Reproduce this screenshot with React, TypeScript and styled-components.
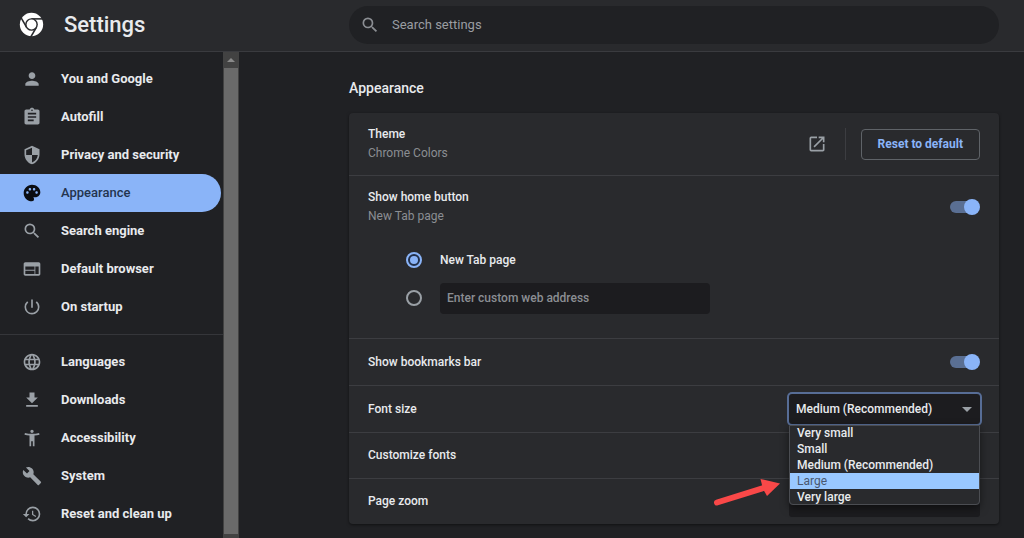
import React from "react";
import styled, { createGlobalStyle, css } from "styled-components";
import {
  MdPerson,
  MdAssignment,
  MdSecurity,
  MdPalette,
  MdSearch,
  MdWeb,
  MdPowerSettingsNew,
  MdLanguage,
  MdFileDownload,
  MdAccessibilityNew,
  MdBuild,
  MdRestore,
  MdOpenInNew,
} from "react-icons/md";

const color = {
  page: "#202124",
  surface: "#292a2d",
  field: "#1c1c1f",
  line: "#3c3d41",
  text: "#e8eaed",
  muted: "#8b8e93",
  icon: "#9aa0a6",
  accent: "#8ab4f8",
};

const GlobalStyle = createGlobalStyle`
  *, *::before, *::after { box-sizing: border-box; }
  body {
    margin: 0;
    background: ${color.page};
    color: ${color.text};
    font: 500 12px/19px Roboto, "Liberation Sans", sans-serif;
  }
  button, input, select { font: inherit; color: inherit; margin: 0; }
`;

const Page = styled.div`
  display: grid;
  grid-template: auto 1fr / 239px 1fr;
  height: 100vh;
  overflow: hidden;
`;

const Header = styled.header`
  grid-column: 1 / -1;
  display: grid;
  grid-template-columns: subgrid;
  align-items: center;
  height: 52px;
  padding-bottom: 2px;
  background: ${color.surface};
  border-bottom: 1px solid #3a3b3f;
`;

const Brand = styled.div`
  display: flex;
  align-items: center;
  gap: 20px;
  padding-left: 19px;
`;

const Title = styled.h1`
  margin: 0;
  font-size: 22px;
  line-height: 28px;
  font-weight: 500;
`;

const SearchBox = styled.label`
  display: flex;
  align-items: center;
  gap: 12px;
  height: 38px;
  margin: 0 25px 0 110px;
  padding: 0 11px;
  border-radius: 19px;
  background: ${color.page};
  color: ${color.muted};
`;

const SearchInput = styled.input`
  flex: 1;
  min-width: 0;
  padding: 0;
  border: 0;
  outline: 0;
  background: transparent;
  font-size: 13px;
  font-weight: 400;
  &::placeholder { color: #9a9da2; opacity: 1; }
`;

const Sidebar = styled.aside`
  display: flex;
  min-height: 0;
  overflow: hidden;
`;

const Nav = styled.nav`
  flex: 1;
  padding-top: 8px;
`;

const NavGroup = styled.ul`
  margin: 0;
  padding: 0;
  list-style: none;
  & + & {
    margin-top: 8px;
    padding-top: 8px;
    border-top: 1px solid #35363a;
  }
`;

const NavLink = styled.a<{ $active?: boolean }>`
  display: flex;
  align-items: center;
  gap: 19px;
  height: 38px;
  margin-right: 2px;
  padding: 0 0 1px 22px;
  border-radius: 0 19px 19px 0;
  color: ${color.text};
  font-size: 13px;
  font-weight: 700;
  text-decoration: none;
  svg { color: ${color.icon}; }
  ${(p) =>
    p.$active &&
    css`
      background: ${color.accent};
      color: #24344f;
      font-weight: 500;
      svg { color: #0b0d12; }
    `}
`;

const ScrollTrack = styled.div`
  display: flex;
  flex-direction: column;
  width: 16px;
  padding: 0 1px 4px;
  background: #424242;
`;

const ScrollUp = styled.div`
  display: grid;
  place-items: center;
  height: 16px;
`;

const ScrollThumb = styled.div`
  flex: 1;
  background: #6a6a6a;
`;

const Main = styled.main`
  min-width: 0;
  padding: 26px 25px 14px 110px;
`;

const SectionTitle = styled.h2`
  margin: 0 0 15px;
  font-size: 14px;
  line-height: 20px;
  font-weight: 500;
`;

const Card = styled.section`
  border-radius: 4px;
  background: ${color.surface};
  box-shadow: 0 1px 3px rgba(0, 0, 0, 0.5);
`;

const Row = styled.div<{ $height: number }>`
  display: flex;
  align-items: center;
  justify-content: space-between;
  min-height: ${(p) => p.$height}px;
  padding: 0 19px;
`;

const Divided = styled.div`
  & + & { border-top: 1px solid ${color.line}; }
`;

const Label = styled.label`
  display: block;
`;

const Sub = styled.div`
  color: ${color.muted};
  font-weight: 400;
`;

const Actions = styled.div`
  display: flex;
  align-items: center;
`;

const IconButton = styled.button`
  display: grid;
  padding: 0;
  border: 0;
  background: none;
  color: ${color.icon};
`;

const Separator = styled.span`
  width: 1px;
  height: 32px;
  margin: 0 15px 0 18px;
  background: ${color.line};
`;

const OutlineButton = styled.button`
  height: 31px;
  padding: 0 16px;
  border: 1px solid #5f6368;
  border-radius: 4px;
  background: transparent;
  color: ${color.accent};
  font-weight: 700;
`;

const Toggle = styled.input.attrs({ type: "checkbox", role: "switch" })`
  appearance: none;
  display: grid;
  align-items: center;
  width: 30px;
  height: 16px;
  &::before, &::after { content: ""; grid-area: 1 / 1; }
  &::before {
    height: 12px;
    margin-right: 2px;
    border-radius: 6px;
    background: #5a6f93;
  }
  &::after {
    width: 16px;
    height: 16px;
    border-radius: 50%;
    background: ${color.accent};
    justify-self: start;
  }
  &:checked::after { justify-self: end; }
`;

const Choices = styled.div`
  padding: 4px 19px 21px 57px;
`;

const Choice = styled.div`
  display: flex;
  align-items: center;
  gap: 18px;
  height: 38px;
`;

const Radio = styled.input.attrs({ type: "radio" })`
  appearance: none;
  display: grid;
  place-items: center;
  width: 16px;
  height: 16px;
  border: 2px solid ${color.icon};
  border-radius: 50%;
  &:checked {
    border-color: ${color.accent};
    background: #22304a;
  }
  &:checked::before {
    content: "";
    width: 8px;
    height: 8px;
    border-radius: 50%;
    background: ${color.accent};
  }
`;

const TextField = styled.input`
  width: 270px;
  height: 31px;
  padding: 0 7px;
  border: 0;
  border-radius: 4px;
  background: ${color.field};
  &::placeholder { color: ${color.muted}; opacity: 1; }
`;

const SelectBox = styled.div<{ $open?: boolean }>`
  position: relative;
  display: flex;
  align-items: center;
  justify-content: flex-end;
  width: 191px;
  height: 30px;
  border-radius: 3px;
  background: ${color.field};
  box-shadow: ${(p) => (p.$open ? "0 0 0 2px #576d96" : "none")};
`;

const Select = styled.select`
  appearance: none;
  flex: 1;
  height: 30px;
  padding: 0 24px 0 7px;
  border: 0;
  outline: 0;
  background: transparent;
`;

const Caret = styled.svg`
  position: absolute;
  right: 8px;
  pointer-events: none;
`;

const Popup = styled.ul`
  position: absolute;
  z-index: 2;
  top: 31px;
  left: 0;
  right: 0;
  margin: 0;
  padding: 0;
  overflow: hidden;
  list-style: none;
  line-height: 16px;
  background: ${color.surface};
  border-radius: 0 0 4px 4px;
  outline: 1px solid #4b4d52;
  outline-offset: -1px;
  box-shadow: 0 3px 8px rgba(0, 0, 0, 0.5);
`;

const Option = styled.li<{ $active?: boolean }>`
  padding: 0 8px;
  ${(p) =>
    p.$active &&
    css`
      background: #99c8ff;
      color: #4a5870;
      font-weight: 400;
    `}
`;

const Pointer = styled.svg`
  position: absolute;
  z-index: 3;
  top: 80px;
  left: -78px;
`;

const ChromeLogo = () => (
  <svg width="25" height="25" viewBox="0 0 24 24" aria-hidden="true">
    <circle cx="12" cy="12" r="11.2" fill="#fff" />
    <circle cx="12" cy="12" r="6.1" fill="#292a2d" />
    <g stroke="#292a2d" strokeWidth="1.5" fill="none">
      <path d="M12 6.6H23" />
      <path d="M12 6.6H23" transform="rotate(120 12 12)" />
      <path d="M12 6.6H23" transform="rotate(240 12 12)" />
    </g>
    <circle cx="12" cy="12" r="4.7" fill="#fff" />
  </svg>
);

const groups = [
  [
    { label: "You and Google", Icon: MdPerson },
    { label: "Autofill", Icon: MdAssignment },
    { label: "Privacy and security", Icon: MdSecurity },
    { label: "Appearance", Icon: MdPalette, active: true },
    { label: "Search engine", Icon: MdSearch },
    { label: "Default browser", Icon: MdWeb },
    { label: "On startup", Icon: MdPowerSettingsNew },
  ],
  [
    { label: "Languages", Icon: MdLanguage },
    { label: "Downloads", Icon: MdFileDownload },
    { label: "Accessibility", Icon: MdAccessibilityNew },
    { label: "System", Icon: MdBuild },
    { label: "Reset and clean up", Icon: MdRestore },
  ],
];

const sizes = ["Very small", "Small", "Medium (Recommended)", "Large", "Very large"];

const DownCaret = () => (
  <Caret width="10" height="5" viewBox="0 0 10 5" aria-hidden="true">
    <path d="M0 0h10L5 5z" fill={color.icon} />
  </Caret>
);

export default function App() {
  return (
    <>
      <GlobalStyle />
      <Page>
        <Header>
          <Brand>
            <ChromeLogo />
            <Title>Settings</Title>
          </Brand>
          <SearchBox>
            <MdSearch size={20} />
            <SearchInput type="text" placeholder="Search settings" aria-label="Search settings" />
          </SearchBox>
        </Header>
        <Sidebar>
          <Nav aria-label="Settings">
            {groups.map((items, i) => (
              <NavGroup key={i}>
                {items.map(({ label, Icon, active }: any) => (
                  <li key={label}>
                    <NavLink href="#" $active={active} aria-current={active ? "page" : undefined}>
                      <Icon size={20} />
                      {label}
                    </NavLink>
                  </li>
                ))}
              </NavGroup>
            ))}
          </Nav>
          <ScrollTrack aria-hidden="true">
            <ScrollUp>
              <svg width="8" height="4" viewBox="0 0 8 4">
                <path d="M0 4h8L4 0z" fill="#8a8a8a" />
              </svg>
            </ScrollUp>
            <ScrollThumb />
          </ScrollTrack>
        </Sidebar>
        <Main>
          <SectionTitle>Appearance</SectionTitle>
          <Card>
            <Divided>
              <Row $height={62}>
                <div>
                  <div>Theme</div>
                  <Sub>Chrome Colors</Sub>
                </div>
                <Actions>
                  <IconButton aria-label="Open theme gallery">
                    <MdOpenInNew size={20} />
                  </IconButton>
                  <Separator />
                  <OutlineButton>Reset to default</OutlineButton>
                </Actions>
              </Row>
            </Divided>
            <Divided>
              <Row $height={61}>
                <div>
                  <Label htmlFor="home">Show home button</Label>
                  <Sub>New Tab page</Sub>
                </div>
                <Toggle id="home" defaultChecked />
              </Row>
              <Choices role="radiogroup" aria-label="Home page">
                <Choice>
                  <Radio id="newtab" name="homepage" defaultChecked />
                  <Label htmlFor="newtab">New Tab page</Label>
                </Choice>
                <Choice>
                  <Radio name="homepage" aria-label="Custom web address" />
                  <TextField type="text" placeholder="Enter custom web address" aria-label="Custom web address" />
                </Choice>
              </Choices>
            </Divided>
            <Divided>
              <Row $height={46}>
                <Label htmlFor="bookmarks">Show bookmarks bar</Label>
                <Toggle id="bookmarks" defaultChecked />
              </Row>
            </Divided>
            <Divided>
              <Row $height={46}>
                <Label htmlFor="fontsize">Font size</Label>
                <SelectBox $open>
                  <Select id="fontsize" defaultValue="Medium (Recommended)">
                    {sizes.map((s) => (
                      <option key={s}>{s}</option>
                    ))}
                  </Select>
                  <DownCaret />
                  <Popup role="listbox" aria-label="Font size">
                    {sizes.map((s) => (
                      <Option key={s} role="option" aria-selected={s === "Large"} $active={s === "Large"}>
                        {s}
                      </Option>
                    ))}
                  </Popup>
                  <Pointer width="72" height="36" viewBox="0 0 72 36" aria-hidden="true">
                    <path
                      d="M6 28.5L54 13.500"
                      stroke="#f94848"
                      strokeWidth="6"
                      strokeLinecap="round"
                    />
                    <path d="M49.500 5L69 9.500L56 22L52 15z" fill="#f94848" />
                  </Pointer>
                </SelectBox>
              </Row>
            </Divided>
            <Divided>
              <Row $height={45}>
                <div>Customize fonts</div>
              </Row>
            </Divided>
            <Divided>
              <Row $height={45}>
                <Label htmlFor="zoom">Page zoom</Label>
                <SelectBox>
                  <Select id="zoom" defaultValue="100%">
                    <option>100%</option>
                  </Select>
                </SelectBox>
              </Row>
            </Divided>
          </Card>
        </Main>
      </Page>
    </>
  );
}
